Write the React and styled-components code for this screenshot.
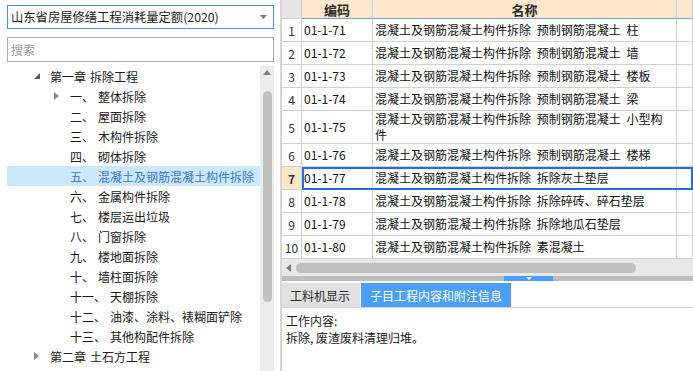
import React from "react";
import styled, { createGlobalStyle } from "styled-components";

const Global = createGlobalStyle`
  html, body { margin: 0; padding: 0; width: 693px; height: 371px; overflow: hidden; background: #fff; }
  body { font-family: "Noto Sans CJK SC", "Noto Sans", sans-serif; font-size: 12px; color: #1e1e1e; }
  #root { width: 693px; height: 371px; }
  * { box-sizing: border-box; }
`;

const Page = styled.div`
  display: flex;
  width: 693px;
  height: 371px;
`;

/* ---------- left ---------- */
const Left = styled.div`
  width: 280px;
  flex: none;
  display: flex;
  flex-direction: column;
  padding: 5px 6px 0 7px;
`;

const Select = styled.div`
  height: 24px;
  border: 1px solid #4a90e2;
  display: flex;
  align-items: center;
  justify-content: space-between;
  padding: 0 6px 0 3px;
  margin-bottom: 8px;
  font-size: 12.3px;
  color: #1e1e1e;
`;

const Search = styled.div`
  height: 25px;
  border: 1px solid #ababab;
  display: flex;
  align-items: center;
  padding: 0 3px;
  color: #9a9a9a;
  margin-bottom: 4px;
`;

const TreeArea = styled.div`
  flex: 1;
  display: flex;
  min-height: 0;
`;

const TreeList = styled.div`
  flex: 1;
  display: flex;
  flex-direction: column;
`;

const TreeRow = styled.div`
  height: 20px;
  flex: none;
  display: flex;
  align-items: center;
  padding-left: ${(p) => (p.$level ? 47 : 27)}px;
  background: ${(p) => (p.$selected ? "#cce8ff" : "transparent")};
  color: ${(p) => (p.$selected ? "#3a78c8" : "#1a1a1a")};
  white-space: nowrap;
`;

const ArrowSlot = styled.span`
  width: 16px;
  height: 20px;
  flex: none;
  display: flex;
  align-items: center;
`;

const Num = styled.span`
  margin-right: 4px;
`;

const VScroll = styled.div`
  width: 14px;
  flex: none;
  background: #ececec;
  display: flex;
  flex-direction: column;
  align-items: center;
`;

const UpArrow = styled.div`
  margin-top: 3px;
  height: 7px;
  display: flex;
  align-items: center;
`;

const VThumb = styled.div`
  margin-top: 15px;
  width: 9px;
  height: 211px;
  border-radius: 5px;
  background: #c1c1c1;
`;

/* ---------- right ---------- */
const Right = styled.div`
  flex: 1;
  display: flex;
  flex-direction: column;
  border-left: 2px solid #d6d6d6;
  min-width: 0;
`;

const GridRow = styled.div`
  display: grid;
  grid-template-columns: 20px 1fr;
`;

const DataGroup = styled.div`
  display: grid;
  grid-template-columns: 71px 304px 1fr;
  outline: ${(p) => (p.$selected ? "2px solid #1f6fe0" : "none")};
  outline-offset: -2px;
  position: relative;
`;

const HeadCell = styled.div`
  height: 19px;
  display: flex;
  align-items: center;
  justify-content: center;
  font-weight: bold;
  font-size: 13px;
  color: #2a2a2a;
  background: ${(p) => (p.$corner ? "#e6e6e6" : "#fde8cc")};
  border-right: 1px solid ${(p) => (p.$corner ? "#d2d2d2" : "#c9d3df")};
  border-bottom: 1px solid ${(p) => (p.$corner ? "#d2d2d2" : "#6fa3e0")};
`;

const NumCell = styled.div`
  min-height: 23px;
  display: flex;
  align-items: center;
  justify-content: center;
  border-right: 1px solid #d2d2d2;
  border-bottom: 1px solid #d2d2d2;
  background: ${(p) => (p.$selected ? "#fde6c8" : "#fff")};
  font-weight: ${(p) => (p.$selected ? "bold" : "normal")};
  color: #333;
  font-size: 12px;
`;

const Cell = styled.div`
  min-height: 23px;
  display: flex;
  align-items: center;
  padding: 0 3px 0 2px;
  border-right: 1px solid #d2d2d2;
  border-bottom: 1px solid #d2d2d2;
  line-height: 16px;
  word-spacing: 3px;
  color: #111;
`;

const HScroll = styled.div`
  height: 17px;
  flex: none;
  background: #e8e8e8;
  display: flex;
  align-items: center;
  padding-left: 4px;
`;

const HThumb = styled.div`
  margin-left: 5px;
  width: 340px;
  height: 10px;
  border-radius: 5px;
  background: #bfbfbf;
`;

const Splitter = styled.div`
  height: 5px;
  flex: none;
  background: #bdbdbd;
  display: flex;
`;

const SplitHandle = styled.div`
  margin-left: 222px;
  width: 49px;
  height: 5px;
  background: #4a9cf5;
  display: flex;
  justify-content: center;
  align-items: flex-start;
  padding-top: 1px;
`;

const TabBar = styled.div`
  flex: none;
  display: flex;
  gap: 1px;
  padding-top: 2px;
  border-bottom: 1px solid #d4d4d4;
`;

const Tab = styled.div`
  height: 24px;
  display: flex;
  align-items: center;
  padding: ${(p) => (p.$active ? "0 9px" : "0 10px 0 8px")};
  background: ${(p) => (p.$active ? "#4a9ff8" : "#e1e1e1")};
  color: ${(p) => (p.$active ? "#fff" : "#2a2a2a")};
  font-size: 12px;
`;

const Content = styled.div`
  padding: 4px 4px;
  line-height: 17px;
  color: #222;
`;

/* ---------- icons ---------- */
const Caret = () => (
  <svg width="7" height="4" viewBox="0 0 7 4">
    <path d="M0 0H7L3.5 4Z" fill="#777" />
  </svg>
);

const Expanded = () => (
  <svg width="6" height="6" viewBox="0 0 6 6" style={{ marginLeft: 8 - 27 + 28 }}>
    <path d="M6 0V6H0Z" fill="#5a5a5a" />
  </svg>
);

const Collapsed = ({ gray }) => (
  <svg width="5" height="8" viewBox="0 0 5 8">
    <path d="M0 0L5 4L0 8Z" fill={gray || "#8a8a8a"} />
  </svg>
);

const TreeArrow = ({ type }) => {
  if (type === "open")
    return (
      <svg width="6" height="6" viewBox="0 0 6 6">
        <path d="M6 0V6H0Z" fill="#5a5a5a" />
      </svg>
    );
  if (type === "closed") return <Collapsed />;
  return null;
};

const tree = [
  { level: 0, arrow: "open", text: "第一章", name: "拆除工程" },
  { level: 1, arrow: "closed", num: "一、", name: "整体拆除" },
  { level: 1, num: "二、", name: "屋面拆除" },
  { level: 1, num: "三、", name: "木构件拆除" },
  { level: 1, num: "四、", name: "砌体拆除" },
  { level: 1, num: "五、", name: "混凝土及钢筋混凝土构件拆除", selected: true },
  { level: 1, num: "六、", name: "金属构件拆除" },
  { level: 1, num: "七、", name: "楼层运出垃圾" },
  { level: 1, num: "八、", name: "门窗拆除" },
  { level: 1, num: "九、", name: "楼地面拆除" },
  { level: 1, num: "十、", name: "墙柱面拆除" },
  { level: 1, num: "十一、", name: "天棚拆除" },
  { level: 1, num: "十二、", name: "油漆、涂料、裱糊面铲除" },
  { level: 1, num: "十三、", name: "其他构配件拆除" },
  { level: 0, arrow: "closed", text: "第二章", name: "土石方工程" },
];

const P = "混凝土及钢筋混凝土构件拆除 ";
const rows = [
  ["01-1-71", P + "预制钢筋混凝土 柱"],
  ["01-1-72", P + "预制钢筋混凝土 墙"],
  ["01-1-73", P + "预制钢筋混凝土 楼板"],
  ["01-1-74", P + "预制钢筋混凝土 梁"],
  ["01-1-75", P + "预制钢筋混凝土 小型构件"],
  ["01-1-76", P + "预制钢筋混凝土 楼梯"],
  ["01-1-77", P + "拆除灰土垫层"],
  ["01-1-78", P + "拆除碎砖、碎石垫层"],
  ["01-1-79", P + "拆除地瓜石垫层"],
  ["01-1-80", P + "素混凝土"],
];

export default function App() {
  return (
    <>
      <Global />
      <Page>
        <Left>
          <Select>
            <span>山东省房屋修缮工程消耗量定额(2020)</span>
            <Caret />
          </Select>
          <Search>搜索</Search>
          <TreeArea>
            <TreeList>
              {tree.map((t, i) => (
                <TreeRow key={i} $level={t.level} $selected={t.selected}>
                  <ArrowSlot>
                    <TreeArrow type={t.arrow} />
                  </ArrowSlot>
                  {t.level === 0 ? <Num>{t.text}</Num> : <Num>{t.num}</Num>}
                  <span>{t.name}</span>
                </TreeRow>
              ))}
            </TreeList>
            <VScroll>
              <UpArrow>
                <svg width="8" height="5" viewBox="0 0 8 5">
                  <path d="M0 5L4 0L8 5Z" fill="#7a7a7a" />
                </svg>
              </UpArrow>
              <VThumb />
            </VScroll>
          </TreeArea>
        </Left>

        <Right>
          <div>
            <GridRow>
              <HeadCell $corner />
              <DataGroup>
                <HeadCell>编码</HeadCell>
                <HeadCell>名称</HeadCell>
                <HeadCell />
              </DataGroup>
            </GridRow>
            {rows.map(([code, name], i) => {
              const sel = i === 6;
              return (
                <GridRow key={code}>
                  <NumCell $selected={sel}>{i + 1}</NumCell>
                  <DataGroup $selected={sel}>
                    <Cell>{code}</Cell>
                    <Cell>{name}</Cell>
                    <Cell />
                  </DataGroup>
                </GridRow>
              );
            })}
          </div>
          <HScroll>
            <svg width="5" height="8" viewBox="0 0 5 8">
              <path d="M5 0L0 4L5 8Z" fill="#7a7a7a" />
            </svg>
            <HThumb />
          </HScroll>
          <Splitter>
            <SplitHandle>
              <svg width="6" height="3" viewBox="0 0 6 3">
                <path d="M0 0H6L3 3Z" fill="#fff" />
              </svg>
            </SplitHandle>
          </Splitter>
          <TabBar>
            <Tab>工料机显示</Tab>
            <Tab $active>子目工程内容和附注信息</Tab>
          </TabBar>
          <Content>
            <div>工作内容:</div>
            <div>拆除, 废渣废料清理归堆。</div>
          </Content>
        </Right>
      </Page>
    </>
  );
}
